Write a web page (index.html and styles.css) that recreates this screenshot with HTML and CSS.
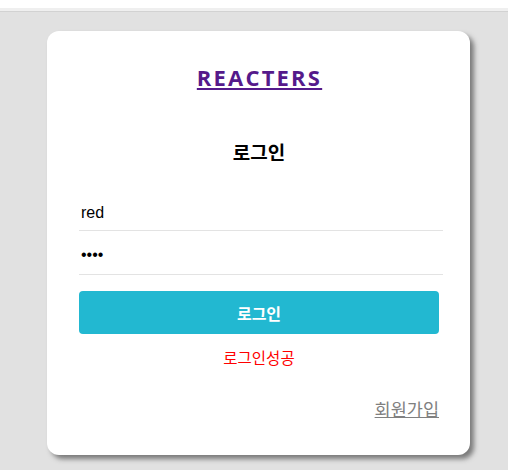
FILE: index.html
```html
<!DOCTYPE html>
<html lang="ko">
<head>
<meta charset="utf-8">
<link rel="stylesheet" href="styles.css">
</head>
<body>
<div class="topbar"></div>
<main class="page">
  <div class="card">
    <a class="brand" href="#">REACTERS</a>
    <h1 class="heading">로그인</h1>
    <form class="form">
      <input class="field" type="text" value="red">
      <input class="field pw" type="password" value="1234">
      <button class="submit" type="button">로그인</button>
    </form>
    <p class="msg">로그인성공</p>
    <div class="footer"><a class="join" href="#">회원가입</a></div>
  </div>
</main>
</body>
</html>
```
FILE: styles.css
```css
html, body { margin: 0; padding: 0; }
body {
  background: #e1e1e1;
  font-family: "Liberation Sans", "Noto Sans CJK KR", sans-serif;
  height: 470px;
  overflow: hidden;
}
.topbar {
  height: 8px;
  background: #fff;
  border-bottom: 3px solid #efefef;
  box-shadow: 0 1px 0 #d2d2d2;
  margin-bottom: 1px;
}
.page {
  padding: 19px 0 0 47px;
}
.card {
  width: 423px;
  height: 424px;
  box-sizing: border-box;
  background: #fff;
  border-radius: 12px;
  box-shadow: 4px 4px 5px #7a7a7a;
  padding: 31px 31px 0 32px;
  display: flex;
  flex-direction: column;
  align-items: center;
}
.brand {
  font-family: "Open Sans", sans-serif;
  font-weight: 700;
  font-size: 22px;
  letter-spacing: 2.2px;
  color: #551a8b;
  line-height: 30px;
  margin-left: 1px;
}
.heading {
  font-family: "Noto Sans CJK KR", sans-serif;
  font-size: 19px;
  font-weight: 700;
  margin: 47px 0 0;
  line-height: 26px;
  color: #000;
}
.form {
  align-self: stretch;
  display: flex;
  flex-direction: column;
  margin-top: 23px;
}
.field {
  border: none;
  border-bottom: 1px solid #e3e3e3;
  outline: none;
  font-family: "Liberation Sans", sans-serif;
  font-size: 16px;
  padding: 14px 2px 6px 2px;
  width: 364px;
  box-sizing: border-box;
  height: 43px;
  color: #000;
}
.pw { height: 44px; padding-top: 12px; padding-bottom: 8px; }
.submit {
  margin-top: 16px;
  height: 43px;
  border: none;
  border-radius: 4px;
  background: #22b8d1;
  color: #fff;
  font-family: "Noto Sans CJK KR", sans-serif;
  font-weight: 700;
  font-size: 16px;
  width: 360px;
}
.msg {
  font-family: "Noto Sans CJK KR", sans-serif;
  color: #ff0000;
  font-size: 15.5px;
  margin: 12px 0 0;
  line-height: 22px;
}
.footer {
  align-self: stretch;
  display: flex;
  justify-content: flex-end;
  margin-top: 29px;
}
.join {
  font-family: "Noto Sans CJK KR", sans-serif;
  color: #808080;
  font-size: 17.5px;
  line-height: 24px;
}
```
